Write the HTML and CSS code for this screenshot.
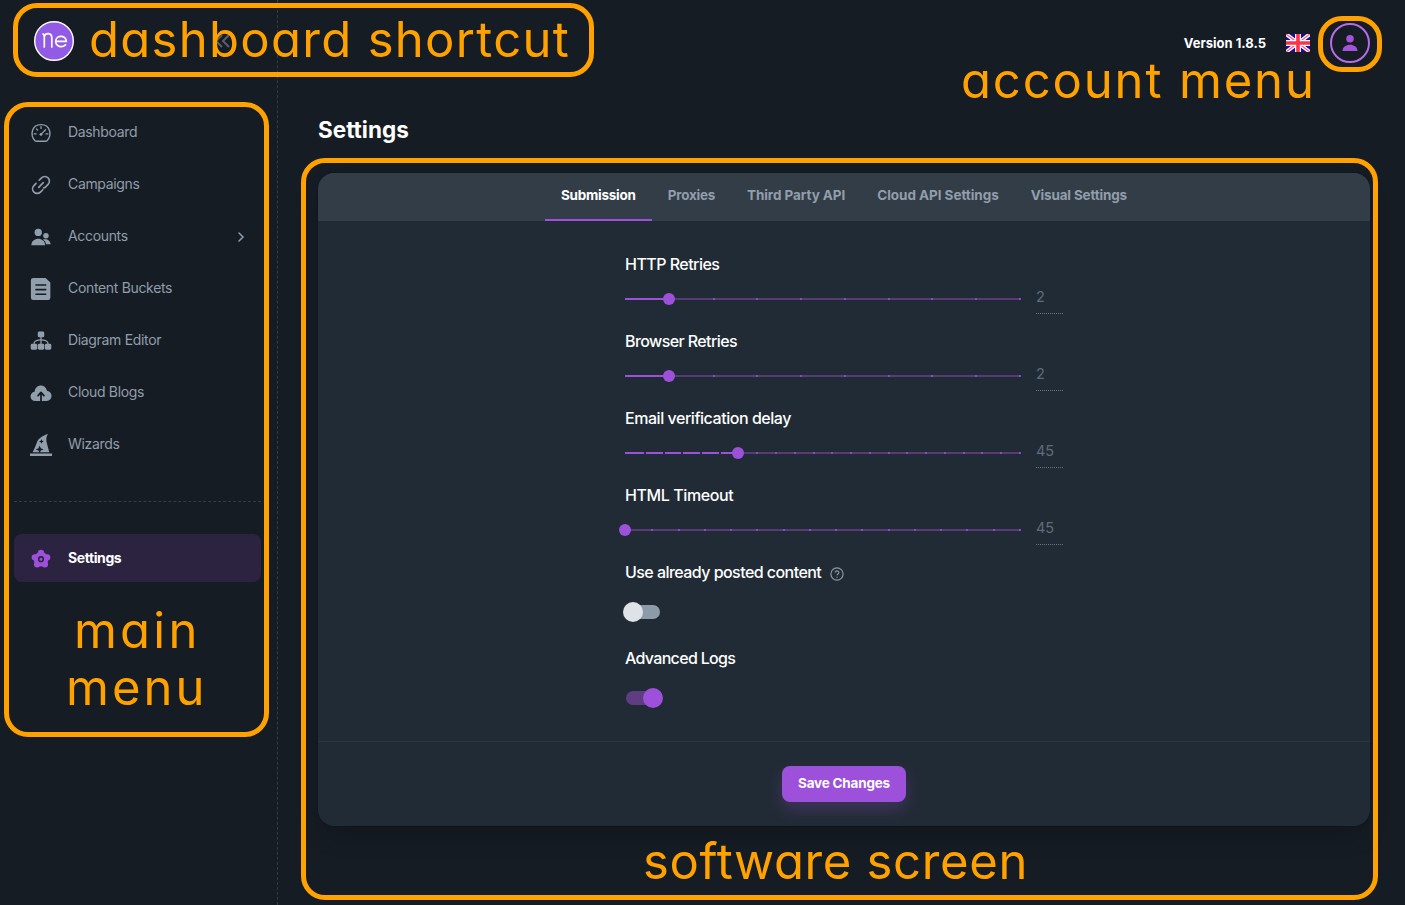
FILE: index.html
```html
<!DOCTYPE html>
<html lang="en">
<head>
<meta charset="utf-8">
<title>Settings</title>
<link rel="stylesheet" href="styles.css">
</head>
<body>
<div class="app">
  <aside class="sidebar">
    <div class="brand">
      <svg class="logo" viewBox="0 0 40 40"><circle cx="20" cy="20" r="19.3" fill="#925be6" stroke="#fff" stroke-width="1.4"/><g fill="none" stroke="#fff" stroke-width="1.700" stroke-linecap="round"><path d="M10.300 26V15.500c0-1.300-.3-2-1.200-2.500M10.300 15.500c1.200-4 7.500-4 7.500 1.500v9"/><path d="M22.500 20.300H32.300c0-6.600-10.600-6.500-10.600 0 0 5.600 6.500 6.600 9.800 3.500"/></g></svg>
      <svg class="collapse" viewBox="0 0 24 24"><path d="M13 6l-6 6 6 6M20 6l-6 6 6 6" fill="none" stroke="#56616d" stroke-width="2"/></svg>
    </div>
    <nav class="nav">
      <a class="item"><svg class="icon" viewBox="0 0 24 24"><path d="M5.500 20.500C-.5 14 2 2.800 12 2.800s12.500 11.200 6.500 17.700c-.5.500-.8.500-1.500.500H7c-.7 0-1 0-1.500-.5z" fill="none" stroke="currentColor" stroke-width="1.500"/><path d="M12 13.500l5-5M12 5v2M7 7.500l1.200 1.200M4.600 13h2M17.500 13h2" stroke="currentColor" stroke-width="1.400" stroke-linecap="round"/><circle cx="12" cy="13.500" r="1.600" fill="currentColor"/></svg><span class="name">Dashboard</span></a>
      <a class="item"><svg class="icon" viewBox="0 0 24 24"><g fill="none" stroke="currentColor" stroke-width="1.800" stroke-linecap="round"><path d="M9.500 14.500l5-5"/><path d="M10 6.800l2.600-2.500a4.950 4.950 0 0 1 7.100 7.100l-2.600 2.600c-.7.700-1.500 1.100-2.400 1.300"/><path d="M14 17.200l-2.600 2.500a4.950 4.950 0 0 1-7.100-7.100l2.300-2.400"/></g></svg><span class="name">Campaigns</span></a>
      <a class="item"><svg class="icon" viewBox="0 0 24 24" fill="currentColor"><circle cx="9" cy="7" r="4"/><circle cx="17.400" cy="10.500" r="3"/><path d="M1.500 21c0-9.500 15-9.500 15 0zM14 14.800c4-1.500 8.500.8 8.500 5.200h-5c-.3-2.300-1.500-4-3.500-5.200z"/></svg><span class="name">Accounts</span><svg class="arrow" viewBox="0 0 16 16"><path d="M6 4l4 4-4 4" fill="none" stroke="currentColor" stroke-width="1.500" stroke-linecap="round"/></svg></a>
      <a class="item"><svg class="icon" viewBox="0 0 24 24"><path d="M3.500 0H17l5.200 4.800v16.700a2.500 2.500 0 0 1-2.500 2.500H3.500A2.500 2.500 0 0 1 1 21.500v-19A2.500 2.500 0 0 1 3.500 0z" fill="currentColor"/><path d="M6.500 7.700h10.600M6.500 12.700h10.600M6.500 17.700h10.600" stroke="#161c24" stroke-width="1.700" stroke-linecap="round"/></svg><span class="name">Content Buckets</span></a>
      <a class="item"><svg class="icon" viewBox="0 0 24 24" fill="currentColor"><rect x="8.500" y="1.500" width="7" height="6.500" rx="1.500"/><rect x=".8" y="15" width="7" height="6.500" rx="1.500"/><rect x="8.500" y="15" width="7" height="6.500" rx="1.500"/><rect x="16.200" y="15" width="7" height="6.500" rx="1.500"/><path d="M12 7v9M4.300 15.500c0-4 3-4.200 7.700-5 4.700.8 7.700 1 7.700 5" fill="none" stroke="currentColor" stroke-width="1.400"/></svg><span class="name">Diagram Editor</span></a>
      <a class="item"><svg class="icon" viewBox="0 0 24 24"><path d="M6 20.800C-1 20.800-1 11.300 5 10.600 6 1.800 17 1.800 18.500 9.600c7 .7 6.500 11.200-.5 11.200z" fill="currentColor"/><path d="M12 21.300v-8.500M8.800 14.800l3.200-3.500 3.200 3.500" fill="none" stroke="#161c24" stroke-width="1.900" stroke-linejoin="round" stroke-linecap="round"/></svg><span class="name">Cloud Blogs</span></a>
      <a class="item"><svg class="icon" viewBox="0 0 24 24"><path d="M0 21.300h24v2.600H0zM2.800 20C5 16 6.500 11.500 8 7.800 10.500 3.500 14.500 2 19.500-.3 17 5 18 5.500 18 8.500L21 20z" fill="currentColor"/><path d="M10.500 12.500l1.300 3 3 1.300-3 1.200-1.300 3-1.200-3-3-1.200 3-1.300zM12.500 5.500l.8 1.800 1.800.8-1.800.8-.8 1.800-.8-1.800-1.800-.8 1.800-.8z" fill="#161c24"/></svg><span class="name">Wizards</span></a>
      <hr class="rule">
      <a class="item active"><svg class="icon" viewBox="0 0 24 24"><g fill="#9d50d9"><circle cx="12" cy="5.400" r="3.500"/><circle cx="18.700" cy="10.200" r="3.500"/><circle cx="16.200" cy="17.800" r="3.500"/><circle cx="7.800" cy="17.800" r="3.500"/><circle cx="5.300" cy="10.200" r="3.500"/><circle cx="12" cy="12.200" r="7.900"/></g><circle cx="12" cy="12.200" r="2.500" fill="none" stroke="#2b2340" stroke-width="1.700"/></svg><span class="name">Settings</span></a>
    </nav>
  </aside>
  <div class="page">
    <header class="topbar">
      <span class="version">Version 1.8.5</span>
      <svg class="flag" viewBox="0 0 24 18"><path fill="#2902a6" d="M0 0h24v18H0z"/><path d="M0 0l24 18M24 0L0 18" stroke="#fff" stroke-width="3.800"/><path d="M0 0l24 18M24 0L0 18" stroke="#f2607e" stroke-width="1.300"/><path d="M12 0v18M0 9h24" stroke="#fff" stroke-width="6"/><path d="M12 0v18M0 9h24" stroke="#fb3449" stroke-width="3.600"/></svg>
      <span class="avatar"><svg viewBox="0 0 18 18" fill="#a352dc"><circle cx="9" cy="4.800" r="3.800"/><path d="M1.500 17c0-8.500 15-8.500 15 0z"/></svg></span>
    </header>
    <h1 class="title">Settings</h1>
    <main class="card">
      <div class="tabs"><a class="tab on">Submission</a><a class="tab t2">Proxies</a><a class="tab t3">Third Party API</a><a class="tab t4">Cloud API Settings</a><a class="tab t5">Visual Settings</a></div>
      <div class="form">
        <section class="field"><h2 class="label l1">HTTP Retries</h2><div class="row"><div class="slider"><div class="ticks"><i></i><i></i><i></i><i></i><i></i><i></i><i></i><i></i><i></i><i></i></div><div class="fill" style="width:11.11%"><b class="thumb"></b></div></div><span class="value">2</span></div></section>
        <section class="field"><h2 class="label l2">Browser Retries</h2><div class="row"><div class="slider"><div class="ticks"><i></i><i></i><i></i><i></i><i></i><i></i><i></i><i></i><i></i><i></i></div><div class="fill" style="width:11.11%"><b class="thumb"></b></div></div><span class="value">2</span></div></section>
        <section class="field"><h2 class="label l3">Email verification delay</h2><div class="row"><div class="slider"><div class="fill" style="width:28.57%"><b class="thumb"></b></div><div class="ticks"><i class="none"></i><i class="past"></i><i class="past"></i><i class="past"></i><i class="past"></i><i class="past"></i><i class="none"></i><i></i><i></i><i></i><i></i><i></i><i></i><i></i><i></i><i></i><i></i><i></i><i></i><i></i><i></i><i></i></div></div><span class="value">45</span></div></section>
        <section class="field"><h2 class="label l4">HTML Timeout</h2><div class="row"><div class="slider"><div class="ticks"><i></i><i></i><i></i><i></i><i></i><i></i><i></i><i></i><i></i><i></i><i></i><i></i><i></i><i></i><i></i><i></i></div><div class="fill" style="width:0"><b class="thumb"></b></div></div><span class="value">45</span></div></section>
        <section class="option"><h2 class="label l5">Use already posted content<svg class="help" viewBox="0 0 14 14" fill="none" stroke="#8b97a4"><circle cx="7" cy="7" r="6.100" stroke-width="1.200"/><path d="M5.200 5.600c0-2.500 3.700-2.300 3.700 0 0 1.400-1.900 1.300-1.900 2.700M7 9.700v1.100" stroke-width="1.200"/></svg></h2><div class="switch"></div></section>
        <section class="option"><h2 class="label l6">Advanced Logs</h2><div class="switch checked"></div></section>
      </div>
      <footer class="actions"><button class="save">Save Changes</button></footer>
    </main>
  </div>
</div>
<div class="mark mark-shortcut"></div><div class="mark mark-menu"></div><div class="mark mark-screen"></div><div class="mark mark-account"></div>
<div class="note note-shortcut">dashboard shortcut</div>
<div class="note note-account">account menu</div>
<div class="note note-main">main</div>
<div class="note note-menu">menu</div>
<div class="note note-screen">software screen</div>
</body>
</html>
```
FILE: styles.css
```css
* { box-sizing: border-box; }
body { margin: 0; background: #161c24; font-family: Inter, "Liberation Sans", sans-serif; color: #fff; }
.app { display: flex; height: 905px; overflow: hidden; }
.sidebar { width: 278px; flex: none; border-right: 1px dashed #333b44; padding: 21px 16px 0 14px; }
.brand { display: flex; align-items: center; justify-content: space-between; height: 40px; padding: 0 28px 0 20px; }
.logo { width: 40px; height: 40px; }
.collapse { width: 24px; height: 24px; }
.nav { display: flex; flex-direction: column; gap: 4px; padding-top: 47px; }
.item { display: flex; align-items: center; height: 48px; padding: 0 12px 0 16px; border-radius: 8px; color: #919eab; font-size: 14px; letter-spacing: -.33px; }
.icon { width: 22px; height: 22px; margin: 2px 16px 0 0; overflow: visible; }
.name { flex: 1; padding-bottom: 2px; }
.arrow { width: 16px; height: 16px; margin-top: 2px; }
.rule { width: 100%; margin: 29px 0 28px; border: 0; border-top: 1px dashed #333b44; }
.active { background: #2b2340; color: #fff; font-weight: 700; letter-spacing: -.4px; }
.active .icon { margin-top: 1px; }
.page { flex: 1; padding: 23px 35px 0 40px; }
.topbar { display: flex; align-items: center; justify-content: flex-end; height: 40px; }
.version { font-size: 13px; font-weight: 700; letter-spacing: 0; padding-bottom: 1px; }
.flag { width: 24px; height: 18px; margin: 0 20px; }
.avatar { width: 40px; height: 40px; border: 2px solid #b66bea; border-radius: 50%; display: grid; place-items: center; }
.avatar svg { width: 18px; height: 18px; }
.title { margin: 52px 0 28px; font-size: 22.5px; line-height: 30px; font-weight: 700; letter-spacing: 0; }
.card { width: 1052px; height: 653px; border-radius: 16px; background: #212b35; box-shadow: 0 0 2px #0006, 0 12px 24px -4px #0003; overflow: hidden; }
.tabs { height: 48px; background: #333d47; display: flex; justify-content: center; }
.tab { padding: 0 16px; line-height: 45px; font-size: 13.5px; font-weight: 700; color: #919eab; white-space: nowrap; }
.tab.on { color: #fff; border-bottom: 2px solid #9d50d9; letter-spacing: -.25px; }
.t2 { letter-spacing: -.25px; }
.t3 { letter-spacing: -.07px; }
.t4 { letter-spacing: -.05px; }
.t5 { letter-spacing: -.17px; }
.form { width: 438px; margin-left: 307px; height: 520px; padding-top: 30px; }
.field { height: 77px; }
.label { margin: 0; font-size: 16px; line-height: 26px; font-weight: 500; display: flex; align-items: center; white-space: nowrap; }
.l1 { letter-spacing: -.53px; }
.l2 { letter-spacing: -.6px; }
.l3 { letter-spacing: -.46px; }
.l4 { letter-spacing: -.4px; }
.l5 { letter-spacing: -.55px; }
.l6 { letter-spacing: -.68px; }
.row { display: flex; justify-content: space-between; padding-top: 8px; }
.slider { width: 396px; height: 2px; margin-top: 13px; background: #573a76; position: relative; }
.ticks { display: flex; justify-content: space-between; position: absolute; inset: 0; }
.ticks i { width: 2px; height: 2px; background: #8b4bc0; }
.ticks .past { background: #2d2942; }
.ticks .none { background: none; }
.fill { height: 2px; background: #9d50d9; position: relative; }
.thumb { width: 12px; height: 12px; border-radius: 50%; background: #9d50d9; position: absolute; right: -6px; top: -5px; }
.value { width: 27px; height: 29px; line-height: 23px; border-bottom: 1px dotted #68737e; color: #5f6b78; font-size: 14.5px; }
.option { height: 86px; }
.help { width: 14px; height: 14px; margin: 3px 0 0 9px; }
.switch { width: 34px; height: 14px; border-radius: 7px; background: #8d9ba8; margin: 20px 0 0 1px; position: relative; }
.switch::after { content: ""; width: 20px; height: 20px; border-radius: 50%; background: #dfe3e8; position: absolute; left: -3px; top: -3px; }
.switch.checked { background: #5e3d83; }
.switch.checked::after { left: 17px; background: #9d50d9; }
.actions { height: 85px; border-top: 1px solid #2b3640; display: flex; justify-content: center; align-items: center; }
.save { width: 124px; height: 36px; padding: 0 0 2px; border: 0; border-radius: 8px; background: #9d50d9; color: #fff; font: 700 13.5px Inter, sans-serif; letter-spacing: -.2px; box-shadow: 0 8px 16px #9d50d93d; }
.mark { position: absolute; border: 5px solid #ffa200; border-radius: 24px; }
.mark-shortcut { left: 13px; top: 3px; width: 581px; height: 74px; }
.mark-menu { left: 4px; top: 102px; width: 265px; height: 635px; }
.mark-screen { left: 301px; top: 158px; width: 1077px; height: 742px; }
.mark-account { left: 1318px; top: 16px; width: 64px; height: 56px; }
.note { position: absolute; color: #ffa200; font-size: 49px; line-height: 57px; white-space: nowrap; font-feature-settings: "cv11"; }
.note-shortcut { left: 89px; top: 11px; letter-spacing: 1.3px; }
.note-account { left: 961px; top: 52px; letter-spacing: 1.85px; }
.note-main { left: 74px; top: 602px; letter-spacing: 3.200px; }
.note-menu { left: 66px; top: 659px; letter-spacing: 3px; }
.note-screen { left: 643px; top: 833px; letter-spacing: .65px; }
```
